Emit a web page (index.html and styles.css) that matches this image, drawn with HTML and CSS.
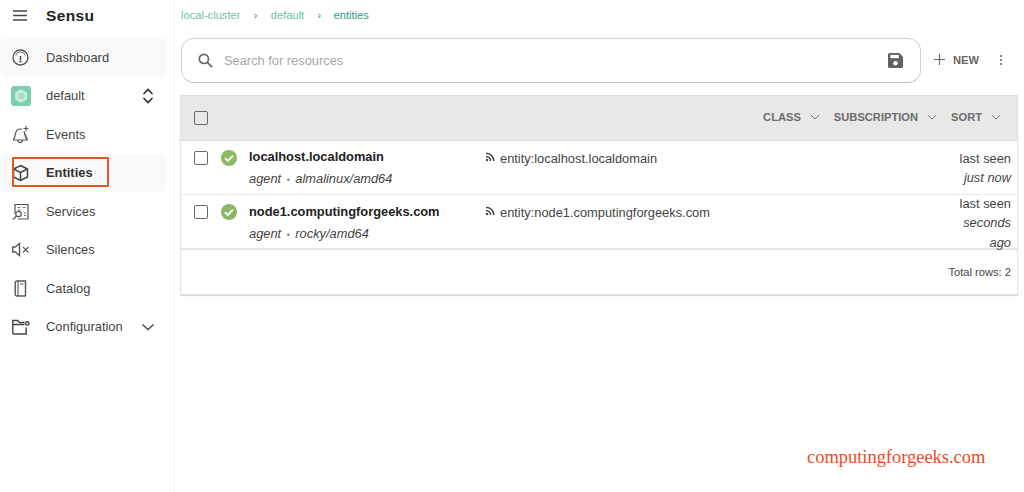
FILE: index.html
```html
<!DOCTYPE html>
<html lang="en">
<head>
<meta charset="utf-8">
<title>Sensu Entities</title>
<link rel="stylesheet" href="styles.css">
</head>
<body>
<div class="app">
  <aside class="sidebar">
    <div class="brand">
      <svg class="burger" width="14" height="11" viewBox="0 0 14 11"><path d="M0 1h14M0 5.500h14M0 10h14" stroke="#444" stroke-width="1.500" fill="none"/></svg>
      <span class="logo">Sensu</span>
    </div>
    <nav class="nav">
      <a class="item active-soft">
        <span class="ico"><svg width="17" height="17" viewBox="0 0 17 17" fill="none" stroke="#555" stroke-width="1.300"><circle cx="8.500" cy="8.500" r="7.500"/><path d="M3.700 6.500a5 5 0 0 1 9.600 0" stroke-width=".8"/><path d="M8.500 7v4.200" stroke-width="1.600"/><circle cx="8.500" cy="12.600" r=".5"/></svg></span>
        <span>Dashboard</span>
      </a>
      <a class="item">
        <span class="ico"><span class="ns-badge"><svg width="20" height="20" viewBox="0 0 20 20"><path d="M10 3l6 3.500v7L10 17l-6-3.500v-7z" fill="#c5e9da"/><circle cx="10" cy="10" r="3" fill="#a4dcc6"/></svg></span></span>
        <span class="grow">default</span>
        <svg class="trail" width="14" height="18" viewBox="0 0 14 18" fill="none" stroke="#333" stroke-width="1.700"><path d="M2.500 7L7 2.500 11.500 7M2.500 11L7 15.500 11.500 11"/></svg>
      </a>
      <a class="item">
        <span class="ico"><svg width="17" height="19" viewBox="0 0 17 19" fill="none" stroke="#555" stroke-width="1.200"><path d="M1 15c2-2 2.200-4 2.700-7 .5-3 2.300-4 4.300-4 .7 0 1.300.1 1.900.4M12 6.500c.7 2 .7 6 3.500 8.500z"/><path d="M1 15h14.500M6 15.500a2.200 2.200 0 0 0 4.400 0M14 1v5M11.500 3.500h5"/></svg></span>
        <span>Events</span>
      </a>
      <a class="item active-soft current">
        <span class="ico"><svg width="17" height="18" viewBox="0 0 17 18" fill="none" stroke="#444" stroke-width="1.500"><path d="M8.500 1.500l7 3.500v8l-7 3.500-7-3.500V5z"/><path d="M1.500 5l7 3.500 7-3.500M8.500 8.500v8"/></svg></span>
        <span>Entities</span>
      </a>
      <a class="item">
        <span class="ico"><svg width="17" height="17" viewBox="0 0 17 17" fill="none" stroke="#555" stroke-width="1.200"><path d="M3 11V1.500h13V16H6"/><path d="M5.500 4.500h3M10.500 4.500h3M5.500 7h3M12 10h2M12 12.500h2" stroke="#777"/><circle cx="6.500" cy="11" r="2.700"/><path d="M4.500 13L1 16.500"/></svg></span>
        <span>Services</span>
      </a>
      <a class="item">
        <span class="ico"><svg width="18" height="15" viewBox="0 0 18 15" fill="none" stroke="#555" stroke-width="1.400"><path d="M.8 5h2.400L7.500 1.500v12L3.200 10H.8z"/><path d="M11 5l5.500 5.500M16.500 5L11 10.500" stroke-width="1.100"/></svg></span>
        <span>Silences</span>
      </a>
      <a class="item">
        <span class="ico"><svg width="13" height="17" viewBox="0 0 13 17" fill="none" stroke="#555" stroke-width="1.400"><path d="M3 1h8.500v14.500a.5.5 0 0 1-.5.500H3a1.800 1.800 0 0 1-1.800-1.800V2.800A1.800 1.800 0 0 1 3 1z"/><path d="M4 1v15M6 4h3.500" stroke-width="1.100"/></svg></span>
        <span>Catalog</span>
      </a>
      <a class="item">
        <span class="ico"><svg width="18" height="16" viewBox="0 0 18 16" fill="none" stroke="#444" stroke-width="1.400"><path d="M.8 15V1.500h5l1.500 2h5.200"/><path d="M.8 5.500h11.700M.8 15h13.400V8.500"/><circle cx="15.300" cy="4.400" r="1.700"/></svg></span>
        <span class="grow">Configuration</span>
        <svg class="trail" width="14" height="8" viewBox="0 0 14 8" fill="none" stroke="#444" stroke-width="1.300"><path d="M1.500 1.500L7 6.500 12.500 1.500"/></svg>
      </a>
    </nav>
    <span class="callout"></span>
  </aside>

  <main class="main">
    <div class="crumbs">
      <span>local-cluster</span><span class="sep">›</span><span>default</span><span class="sep">›</span><span class="here">entities</span>
    </div>

    <div class="toolbar">
      <div class="search">
        <svg width="15" height="15" viewBox="0 0 16 16" fill="none" stroke="#666" stroke-width="1.800"><circle cx="6.300" cy="6.300" r="4.900"/><path d="M9.800 9.800L15 15"/></svg>
        <span class="placeholder">Search for resources</span>
        <svg class="save" width="15" height="15" viewBox="0 0 16 16"><path d="M2 0h10l4 4v10a2 2 0 0 1-2 2H2a2 2 0 0 1-2-2V2a2 2 0 0 1 2-2z" fill="#616161"/><rect x="2.500" y="2" width="9" height="3.500" fill="#fff"/><circle cx="8" cy="10.800" r="2.400" fill="#fff"/></svg>
      </div>
      <div class="new">
        <svg width="11" height="11" viewBox="0 0 11 11"><path d="M5.500 0v11M0 5.500h11" stroke="#666" stroke-width="1.100"/></svg>
        <span>NEW</span>
      </div>
      <svg class="more" width="4" height="12" viewBox="0 0 4 12"><circle cx="2" cy="2" r="1.100" fill="#666"/><circle cx="2" cy="6" r="1.100" fill="#666"/><circle cx="2" cy="10" r="1.100" fill="#666"/></svg>
    </div>

    <section class="table">
      <header class="thead">
        <span class="check"></span>
        <div class="filters">
          <span class="filter">CLASS<svg width="10" height="6" viewBox="0 0 10 6"><path d="M.8 1L5 5l4.200-4" fill="none" stroke="#777" stroke-width="1"/></svg></span>
          <span class="filter">SUBSCRIPTION<svg width="10" height="6" viewBox="0 0 10 6"><path d="M.8 1L5 5l4.200-4" fill="none" stroke="#777" stroke-width="1"/></svg></span>
          <span class="filter">SORT<svg width="10" height="6" viewBox="0 0 10 6"><path d="M.8 1L5 5l4.200-4" fill="none" stroke="#777" stroke-width="1"/></svg></span>
        </div>
      </header>

      <div class="row row-a">
        <span class="check"></span>
        <svg class="status" width="16" height="16" viewBox="0 0 16 16"><circle cx="8" cy="8" r="8" fill="#8bb863"/><path d="M4 8.200l2.800 2.800L12 5.600" fill="none" stroke="#fff" stroke-width="1.900"/></svg>
        <div class="name">
          <strong>localhost.localdomain</strong>
          <em>agent<i class="dot">•</i>almalinux/amd64</em>
        </div>
        <div class="sub">
          <svg width="10" height="10" viewBox="0 0 10 10" fill="none" stroke="#444" stroke-width="1.500"><path d="M1 1.200c4.300 0 7.800 3.500 7.800 7.800M1 4.500c2.500 0 4.500 2 4.500 4.500"/><circle cx="2" cy="8" r="1.200" fill="#444" stroke="none"/></svg>
          <span>entity:localhost.localdomain</span>
        </div>
        <div class="seen"><span>last seen</span><em>just now</em></div>
      </div>

      <div class="row row-b">
        <span class="check"></span>
        <svg class="status" width="16" height="16" viewBox="0 0 16 16"><circle cx="8" cy="8" r="8" fill="#8bb863"/><path d="M4 8.200l2.800 2.800L12 5.600" fill="none" stroke="#fff" stroke-width="1.900"/></svg>
        <div class="name">
          <strong>node1.computingforgeeks.com</strong>
          <em>agent<i class="dot">•</i>rocky/amd64</em>
        </div>
        <div class="sub">
          <svg width="10" height="10" viewBox="0 0 10 10" fill="none" stroke="#444" stroke-width="1.500"><path d="M1 1.200c4.300 0 7.800 3.500 7.800 7.800M1 4.500c2.500 0 4.500 2 4.500 4.500"/><circle cx="2" cy="8" r="1.200" fill="#444" stroke="none"/></svg>
          <span>entity:node1.computingforgeeks.com</span>
        </div>
        <div class="seen"><span>last seen</span><em>seconds<br>ago</em></div>
      </div>

      <footer class="tfoot">Total rows: 2</footer>
    </section>
  </main>
</div>
<span class="watermark">computingforgeeks.com</span>
</body>
</html>
```
FILE: styles.css
```css
* { box-sizing: border-box; }
html, body { margin: 0; height: 100%; }
body {
  position: relative;
  overflow: hidden;
  background: #fff;
  font-family: "Liberation Sans", Arial, sans-serif;
  color: #3c3c3c;
}
.app { display: flex; height: 492px; }

.sidebar {
  position: relative;
  flex: 0 0 175px;
  border-right: 1px solid #f0f0f0;
}
.brand {
  display: flex;
  align-items: center;
  height: 37px;
  padding: 0 0 6px 13px;
  gap: 19px;
}
.logo { font-size: 15.500px; font-weight: 700; color: #222; letter-spacing: .35px; }
.nav { display: flex; flex-direction: column; padding-top: 1px; }
.item {
  display: flex;
  align-items: center;
  height: 38.500px;
  width: 167px;
  padding: 0 12px 0 11px;
  font-size: 12.900px;
  color: #444;
}
.ico {
  display: flex;
  align-items: center;
  justify-content: center;
  flex: 0 0 19px;
  min-width: 0;
  height: 20px;
  margin-right: 16px;
}
.ns-badge {
  display: flex;
  align-items: center;
  justify-content: center;
  flex: none;
  width: 20px;
  height: 20px;
  border-radius: 3px;
  background: #7ccfae;
}
.grow { flex: 1; }
.trail { flex: none; }
.active-soft { background: #f9f9f9; border-radius: 6px; }
.current { font-weight: 700; color: #333; }
.callout {
  position: absolute;
  left: 12px;
  top: 157px;
  width: 97px;
  height: 30px;
  border: 2px solid #e2562a;
  border-radius: 1px;
}

.main { flex: 1; min-width: 0; padding: 0 5px; }
.crumbs {
  display: flex;
  align-items: center;
  height: 30px;
  padding-left: 1px;
  font-size: 11.150px;
  color: #6fc0ad;
}
.sep { margin: 0 13.300px; color: #777; }
.here { margin-left: -1px; color: #2a9d8a; }

.toolbar { display: flex; align-items: center; height: 45px; margin-top: 8px; }
.search {
  display: flex;
  align-items: center;
  width: 740px;
  height: 45px;
  margin-left: 1px;
  padding: 0 17px 1px 16px;
  gap: 11px;
  border: 1px solid #d2d2d2;
  border-bottom-color: #c4c4c4;
  border-radius: 13px;
}
.placeholder { flex: 1; font-size: 12.850px; color: #a8a8a8; }
.new {
  display: flex;
  align-items: center;
  gap: 9px;
  margin: -2px 0 0 13px;
  font-size: 11.150px;
  font-weight: 700;
  color: #666;
}
.new span { margin-left: -1px; }
.more { margin: -2px 0 0 20px; }

.table {
  width: 838px;
  margin-top: 12px;
  border: 1px solid #e4e4e4;
  border-top: 0;
  box-shadow: 0 1px 1px #d8d8d8;
}
.check {
  display: block;
  flex: none;
  width: 14px;
  height: 14px;
  border: 1.500px solid #666;
  border-radius: 2px;
}
.thead {
  display: flex;
  align-items: center;
  justify-content: space-between;
  height: 46px;
  padding: 0 16px 0 13px;
  background: #e8e8e8;
  border-top: 1px solid #dcdcdc;
  border-bottom: 1px solid #dedede;
}
.filters { display: flex; gap: 14px; margin-top: -2px; }
.filter {
  display: flex;
  align-items: center;
  gap: 9px;
  font-size: 11.150px;
  font-weight: 700;
  color: #6c6c6c;
}
.row {
  display: flex;
  align-items: flex-start;
  padding: 0 6px 0 13px;
  border-bottom: 1px solid #ececec;
}
.row-a { height: 54px; }
.row-b { height: 55px; border-bottom: 2px solid #e6e6e6; }
.row .check { margin-top: 10px; }
.status { flex: none; margin: 9px 0 0 13px; }
.name {
  display: flex;
  flex-direction: column;
  flex: 0 0 236px;
  margin: 8px 0 0 12px;
}
.row-b .name { margin-top: 9px; }
.name strong { font-size: 12.850px; line-height: 15px; color: #222; }
.name em { margin-top: 7px; font-size: 12.850px; line-height: 15px; color: #444; }
.dot { margin: 0 5.500px; font-size: 9px; font-style: normal; color: #888; }
.sub {
  display: flex;
  align-items: center;
  flex: 1;
  gap: 5px;
  margin-top: 10px;
  font-size: 12.850px;
  line-height: 15px;
  color: #444;
}
.sub svg { margin-top: -3px; }
.seen {
  display: flex;
  flex-direction: column;
  align-items: flex-end;
  flex: none;
  text-align: right;
  font-size: 12.850px;
  line-height: 19.300px;
  color: #444;
}
.row-a .seen { margin-top: 8px; }
.row-b .seen { margin-top: -1px; }
.tfoot {
  display: flex;
  align-items: center;
  justify-content: flex-end;
  height: 44px;
  padding-right: 6px;
  font-size: 11.150px;
  color: #444;
}

.watermark {
  position: absolute;
  left: 807px;
  top: 446px;
  font-family: "Liberation Serif", serif;
  font-size: 18.450px;
  line-height: 23px;
  color: #f04a25;
}
```
